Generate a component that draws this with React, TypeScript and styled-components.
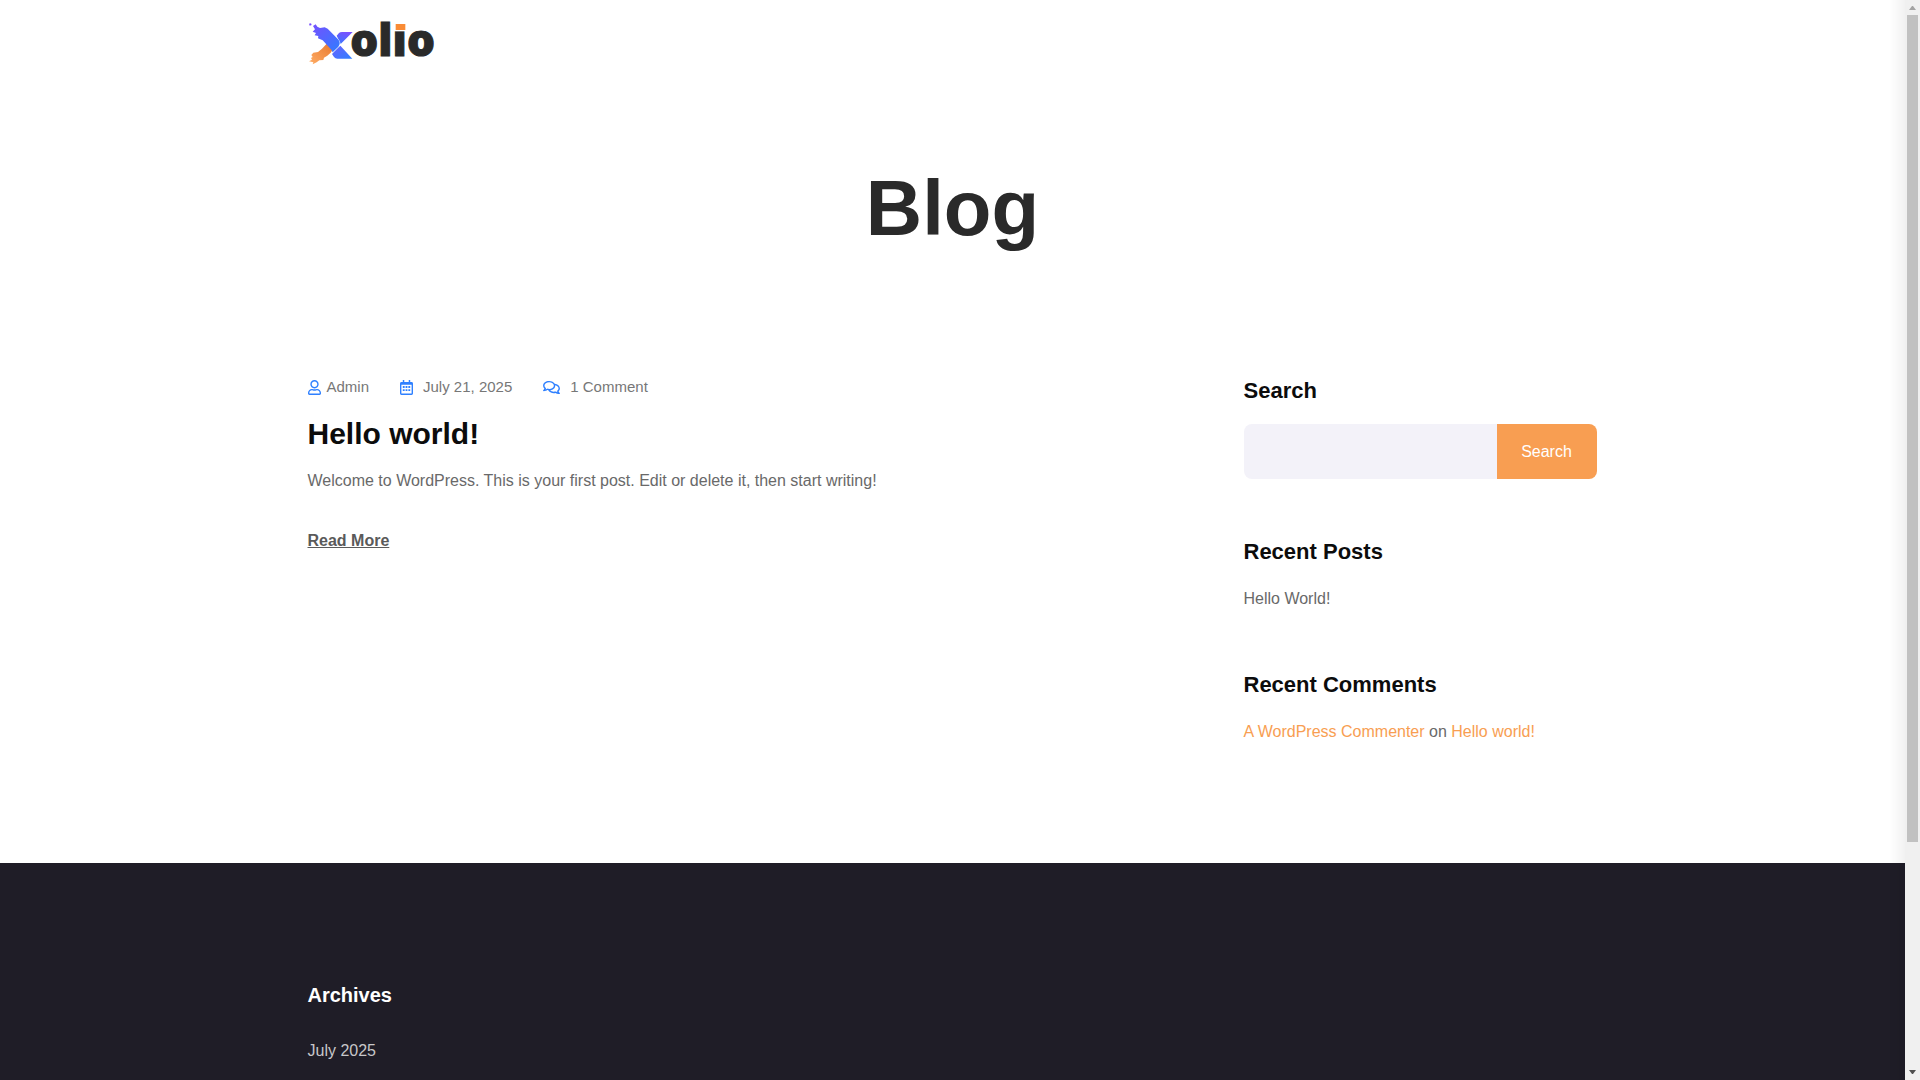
import React from "react";
import styled, { createGlobalStyle } from "styled-components";
import { FaRegUser, FaRegComments } from "react-icons/fa";

const GlobalStyle = createGlobalStyle`
  *, *::before, *::after { box-sizing: border-box; }
  body {
    margin: 0;
    overflow: hidden;
    background: #fff;
    color: #696969;
    font: 16px/26px "Liberation Sans", Arial, sans-serif;
  }
  h1, h2, h3, p, ul { margin: 0; padding: 0; }
  ul { list-style: none; }
  a { color: inherit; text-decoration: none; }
`;

const Page = styled.div`
  padding-right: 15px;
`;

const Container = styled.div`
  max-width: 1320px;
  margin: 0 auto;
  padding: 0 16px 0 15px;
`;

const Header = styled.header`
  padding: 6px 0 14px;
`;

const LogoLink = styled.a`
  display: block;
  width: fit-content;
  svg { display: block; }
`;

const Banner = styled.section`
  padding: 74px 0 121px;
  text-align: center;
`;

const PageTitle = styled.h1`
  color: #2a2a2a;
  font-size: 78px;
  line-height: 98px;
`;

const Columns = styled.main`
  display: grid;
  grid-template-columns: minmax(0, 1fr) 353px;
  gap: 72px;
  padding-bottom: 118px;
`;

const MetaList = styled.ul`
  display: flex;
  gap: 31px;
  color: #777;
  font-size: 15px;
  line-height: 18px;
`;

const MetaItem = styled.li<{ $gap: number; $icon: number }>`
  display: flex;
  align-items: center;
  gap: ${(p) => p.$gap}px;
  svg {
    flex: none;
    width: ${(p) => p.$icon}px;
    height: 15px;
    color: #2f80ff;
  }
`;

const PostTitle = styled.h2`
  margin: 19px 0 15px;
  color: #0c0c0c;
  font-size: 30px;
  line-height: 38px;
`;

const ReadMore = styled.a`
  display: inline-block;
  margin-top: 34px;
  color: #5a5a5a;
  font-weight: 700;
  text-decoration: underline;
`;

const Sidebar = styled.aside`
  display: grid;
  align-content: start;
  gap: 60px;
`;

const WidgetTitle = styled.h2`
  margin-bottom: 20px;
  color: #0c0c0c;
  font-size: 22px;
  line-height: 26px;
`;

const WidgetList = styled.ul`
  line-height: 27px;
`;

const SearchForm = styled.form`
  display: flex;
  height: 55px;
  border-radius: 8px;
  overflow: hidden;
`;

const SearchInput = styled.input`
  flex: 1;
  min-width: 0;
  padding: 0 20px;
  border: 0;
  background: #f3f2f9;
  font: inherit;
`;

const SearchButton = styled.button`
  width: 100px;
  border: 0;
  background: #f89e52;
  color: #fff;
  font: inherit;
`;

const AccentLink = styled.a`
  && { color: #f89e52; }
`;

const Footer = styled.footer`
  padding: 119px 0;
  background: #1f1d27;
  color: #c7c7c9;
`;

const FooterTitle = styled.h2`
  margin-bottom: 30px;
  color: #fff;
  font-size: 20px;
  line-height: 26px;
`;

const EdgeShade = styled.div`
  position: fixed;
  inset: 0 15px 0 auto;
  width: 16px;
  background: linear-gradient(to right, rgba(0, 0, 0, 0), rgba(0, 0, 0, 0.05));
`;

const ScrollTrack = styled.div`
  position: fixed;
  inset: 0 0 0 auto;
  width: 15px;
  display: flex;
  flex-direction: column;
  align-items: center;
  background: #f0f0f0;
`;

const ScrollArrow = styled.svg`
  flex: none;
  display: block;
  width: 15px;
  height: 15px;
`;

const ScrollRail = styled.div`
  flex: 1;
  width: 11px;
`;

const ScrollThumb = styled.div`
  height: calc(79% - 3px);
  background: #c1c1c1;
`;

const Logo = () => (
  <svg width="128" height="65" viewBox="36 -15 384 195" role="img" aria-label="xolio">
    <defs>
      <linearGradient id="stroke" x1="0" y1="0" x2="1" y2="1">
        <stop offset="0" stopColor="#7a4dff" />
        <stop offset="1" stopColor="#2f7dff" />
      </linearGradient>
      <linearGradient id="arm" x1="0.6" y1="0" x2="0.2" y2="1">
        <stop offset="0" stopColor="#7a50ff" />
        <stop offset="1" stopColor="#3a78ff" />
      </linearGradient>
      <linearGradient id="leg" x1="0" y1="0" x2="1" y2="1">
        <stop offset="0" stopColor="#6a60ff" />
        <stop offset="1" stopColor="#2f80ff" />
      </linearGradient>
      <linearGradient id="flame" x1="0" y1="1" x2="1" y2="0">
        <stop offset="0" stopColor="#ffad66" />
        <stop offset="1" stopColor="#e87a30" />
      </linearGradient>
    </defs>
    <path fill="url(#flame)" d="M92 98 L110 116 L104 125 L94 134 L84 140 L82 147 L70 148 L62 154 L50 160 L52 154 L39 151 L48 146 L45 141 L50 138 L46 132 L52 125 L66 123 L78 113 Z" />
    <path fill="url(#arm)" d="M122 74 L129 66 Q132 63 138 63 L170 63 L134 99 Q133 91 127 84 Z" />
    <path fill="url(#leg)" d="M133 104 L169 143 L124 143 Q118 143 114 138 L108 129 L125 112 Z" />
    <path fill="url(#stroke)" d="M39 38 L45 37 L47 42 L41 44 Z M51 45 L59 40 L64 47 L72 51 L86 49 L95 53 L126 85 Q136 96 127 107 L110 124 L106 116 L80 88 L66 82 L67 75 L56 73 L60 66 L50 62 L57 55 Z" />
    <text x="163" y="136" fill="#2a2a2a" stroke="#2a2a2a" strokeWidth="3" fontFamily='"Open Sans", sans-serif' fontWeight="800" fontSize="132">olio</text>
    <path fill="#fff" d="M291 24h42v37h-42z" />
    <path fill="#f98b35" d="M299 39h29v18h-29z" />
  </svg>
);

const CalendarIcon = () => (
  <svg viewBox="0 0 14 16" fill="currentColor" aria-hidden="true">
    <path fillRule="evenodd" d="M3 0h1.6v2h4.8V0H11v2h1.3Q14 2 14 3.600V14.400Q14 16 12.500 16h-11Q0 16 0 14.400V3.600Q0 2 1.700 2H3zM1.500 5v9.500h11V5z" />
    <path d="M3 6.500h2v2H3zM6 6.500h2v2H6zM9 6.500h2v2H9zM3 9.800h2v2H3zM6 9.800h2v2H6zM9 9.800h2v2H9z" />
  </svg>
);

export default function App() {
  return (
    <>
      <GlobalStyle />
      <Page>
        <Header>
          <Container>
            <LogoLink href="#"><Logo /></LogoLink>
          </Container>
        </Header>
        <Banner>
          <PageTitle>Blog</PageTitle>
        </Banner>
        <Container>
          <Columns>
            <article>
              <MetaList>
                <MetaItem $icon={13} $gap={6}><FaRegUser /><a href="#">Admin</a></MetaItem>
                <MetaItem $icon={13} $gap={10}><CalendarIcon />July 21, 2025</MetaItem>
                <MetaItem $icon={17} $gap={10}><FaRegComments /><a href="#">1 Comment</a></MetaItem>
              </MetaList>
              <PostTitle><a href="#">Hello world!</a></PostTitle>
              <p>Welcome to WordPress. This is your first post. Edit or delete it, then start writing!</p>
              <ReadMore href="#">Read More</ReadMore>
            </article>
            <Sidebar>
              <section>
                <WidgetTitle>Search</WidgetTitle>
                <SearchForm onSubmit={(e) => e.preventDefault()}>
                  <SearchInput type="search" aria-label="Search" />
                  <SearchButton type="submit">Search</SearchButton>
                </SearchForm>
              </section>
              <section>
                <WidgetTitle>Recent Posts</WidgetTitle>
                <WidgetList><li><a href="#">Hello World!</a></li></WidgetList>
              </section>
              <section>
                <WidgetTitle>Recent Comments</WidgetTitle>
                <WidgetList>
                  <li>
                    <AccentLink href="#">A WordPress Commenter</AccentLink> on <AccentLink href="#">Hello world!</AccentLink>
                  </li>
                </WidgetList>
              </section>
            </Sidebar>
          </Columns>
        </Container>
        <Footer>
          <Container>
            <FooterTitle>Archives</FooterTitle>
            <ul><li><a href="#">July 2025</a></li></ul>
          </Container>
        </Footer>
      </Page>
      <EdgeShade />
      <ScrollTrack aria-hidden="true">
        <ScrollArrow viewBox="0 0 15 15"><path fill="#a3a3a3" d="M7 6h1l3 4H4z" /></ScrollArrow>
        <ScrollRail><ScrollThumb /></ScrollRail>
        <ScrollArrow viewBox="0 0 15 15"><path fill="#505050" d="M4 5h7l-3 4H7z" /></ScrollArrow>
      </ScrollTrack>
    </>
  );
}
